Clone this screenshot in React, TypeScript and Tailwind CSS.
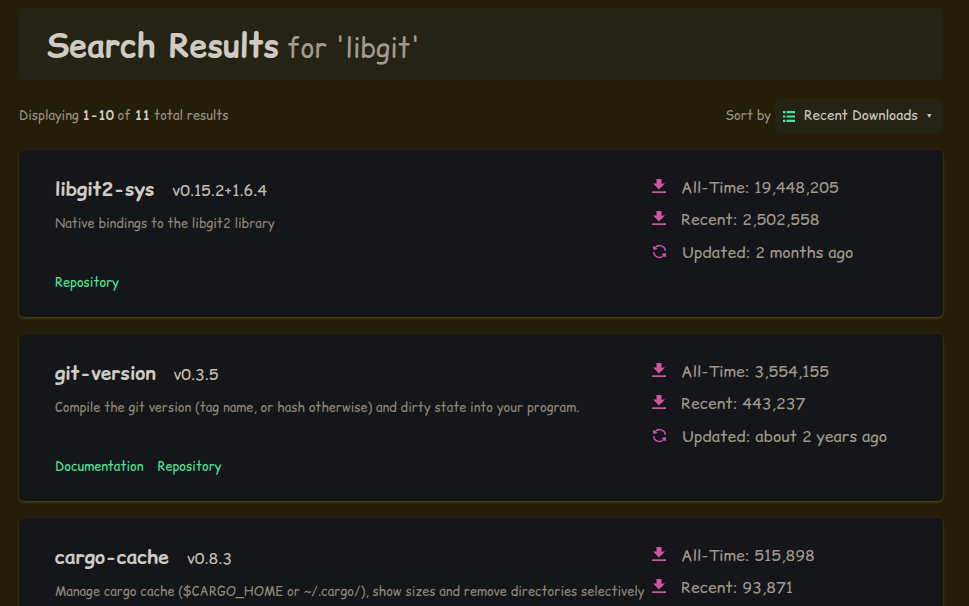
import React from 'react';

const FONT = '[font-family:"Comic_Sans_MS","Comic_Relief","Lato","Noto_Sans",sans-serif]';

const DownloadIcon = () => (
  <svg viewBox="0 0 14 14" className="w-[14px] h-[14px] mb-[2px] text-[#d154a6]" fill="currentColor">
    <path d="M4.5 0h5v4.5h3.5L7 10.5 1 4.5h3.5z" />
    <path d="M0 12.3h14V14H0z" />
  </svg>
);

const SyncIcon = () => (
  <svg viewBox="0 0 16 16" className="w-[15px] h-[15px] mb-[2px] text-[#d154a6]" fill="none" stroke="currentColor" strokeWidth="1.5">
    <path d="M3.5 3.6A6.3 6.3 0 0 1 14.3 7.4" />
    <path d="M12.5 12.4A6.3 6.3 0 0 1 1.7 8.6" />
    <path d="M1 1.5l.4 4.9 4.6-1.2z" fill="currentColor" stroke="none" />
    <path d="M15 14.5l-.4-4.9-4.6 1.2z" fill="currentColor" stroke="none" />
  </svg>
);

const ListIcon = () => (
  <svg viewBox="0 0 12 11" className="w-[12px] h-[11px] text-[#4ee59b]" fill="currentColor">
    <path d="M0 0h2.4v2.2H0zM3.5 0H12v2.2H3.5zM0 4.4h2.4v2.2H0zM3.5 4.4H12v2.2H3.5zM0 8.8h2.4V11H0zM3.5 8.8H12V11H3.5z" />
  </svg>
);

const crates = [
  {
    name: 'libgit2-sys',
    version: 'v0.15.2+1.6.4',
    desc: 'Native bindings to the libgit2 library',
    links: ['Repository'],
    allTime: '19,448,205',
    recent: '2,502,558',
    updated: '2 months ago',
  },
  {
    name: 'git-version',
    version: 'v0.3.5',
    desc: 'Compile the git version (tag name, or hash otherwise) and dirty state into your program.',
    links: ['Documentation', 'Repository'],
    allTime: '3,554,155',
    recent: '443,237',
    updated: 'about 2 years ago',
  },
  {
    name: 'cargo-cache',
    version: 'v0.8.3',
    desc: 'Manage cargo cache ($CARGO_HOME or ~/.cargo/), show sizes and remove directories selectively',
    links: ['Repository'],
    allTime: '515,898',
    recent: '93,871',
    updated: '3 months ago',
  },
];

export default function App() {
  return (
    <div className={`h-[606px] overflow-hidden bg-[#241d08] pl-[19px] pr-[26px] pt-[8px] ${FONT}`}>
      {/* Header */}
      <div className="h-[72px] bg-[#252314] rounded-[5px] pl-[28px] pt-[4px] flex items-center">
        <h1 className="text-[32px] font-bold text-[#cfcac2] leading-none whitespace-nowrap">
          Search Results
          <span className="ml-[8px] text-[26.6px] font-normal text-[#a39b8d]">for 'libgit'</span>
        </h1>
      </div>

      {/* Toolbar */}
      <div className="flex items-center justify-between h-[52px] mt-[9px] pt-[2px] text-[12.8px] text-[#9a9284]">
        <div>
          Displaying <b className="text-[#cfcac2]">1-10</b> of <b className="text-[#cfcac2]">11</b> total results
        </div>
        <div className="flex items-center gap-[4px]">
          <span>Sort by</span>
          <div className="flex items-center h-[34px] w-[168px] pl-[8px] bg-[#252314] rounded-[5px] text-[13.6px] text-[#cfcac2]">
            <ListIcon />
            <span className="ml-[9px]">Recent Downloads</span>
            <span className="ml-[8px] text-[7px]">▼</span>
          </div>
        </div>
      </div>

      {/* Crate cards */}
      <div className="flex flex-col gap-[17px] mt-[9px]">
        {crates.map((c) => (
          <div
            key={c.name}
            className="h-[167px] shrink-0 flex bg-[#141619] rounded-[5px] shadow-[0_1px_3px_0_#5a4c0a] pl-[36px] pt-[26px]"
          >
            <div className="w-[597px] flex flex-col">
              <div className="flex items-baseline gap-[18px] h-[30px]">
                <span className="text-[19.2px] font-bold text-[#cfcac2]">{c.name}</span>
                <span className="text-[16px] text-[#c2bcb1]">{c.version}</span>
              </div>
              <p className="mt-[7px] text-[12.8px] leading-[20px] text-[#8f8778] whitespace-nowrap">{c.desc}</p>
              <div className="flex gap-[14px] mt-[39px] text-[12.8px] leading-[20px] text-[#4ee59b]">
                {c.links.map((l) => (
                  <a key={l}>{l}</a>
                ))}
              </div>
            </div>
            <div className="flex flex-col gap-[10px] text-[16px] text-[#9f9789]">
              <div className="flex items-center gap-[15px] h-[22px]">
                <DownloadIcon />
                <span>All-Time: {c.allTime}</span>
              </div>
              <div className="flex items-center gap-[15px] h-[22px]">
                <DownloadIcon />
                <span>Recent: {c.recent}</span>
              </div>
              <div className="flex items-center gap-[15px] h-[22px] mt-[1px]">
                <SyncIcon />
                <span>Updated: {c.updated}</span>
              </div>
            </div>
          </div>
        ))}
      </div>
    </div>
  );
}
